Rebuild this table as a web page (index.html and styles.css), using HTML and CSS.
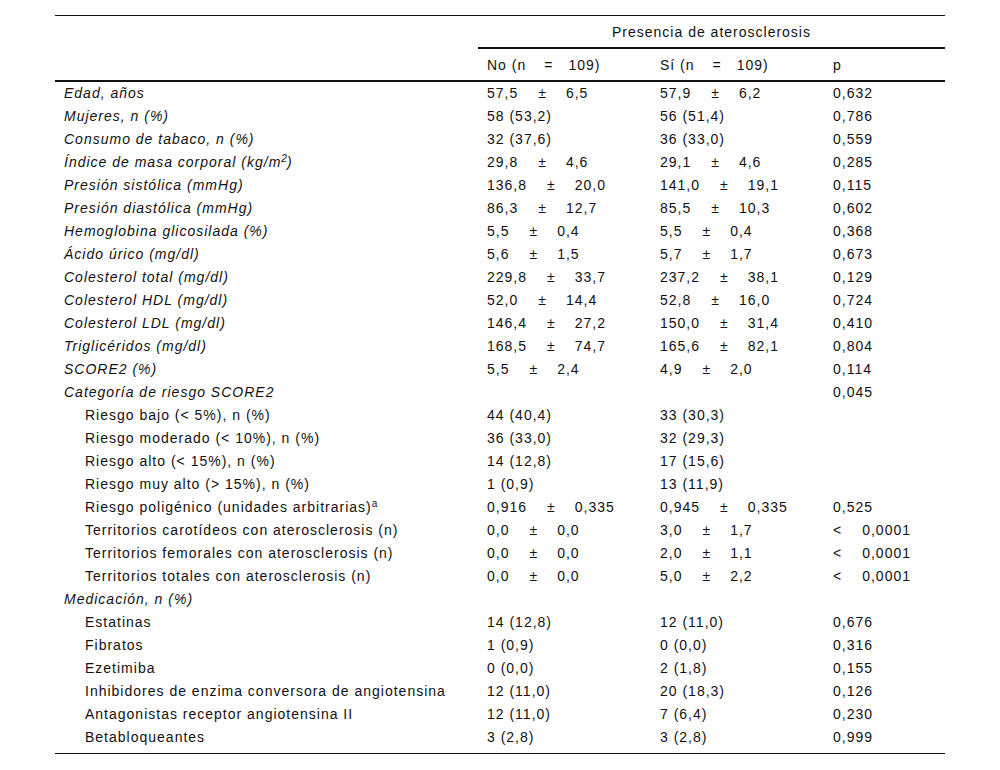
FILE: index.html
```html
<!DOCTYPE html>
<html lang="es">
<head>
<meta charset="utf-8">
<title>Presencia de aterosclerosis</title>
<link rel="stylesheet" href="styles.css">
</head>
<body>
<table class="tbl">
  <colgroup>
    <col class="c1"><col class="c2"><col class="c3"><col class="c4">
  </colgroup>
  <thead>
    <tr class="h1">
      <th class="blank"></th>
      <th class="group" colspan="3">Presencia de aterosclerosis</th>
    </tr>
    <tr class="h2">
      <th></th>
      <th>No (n<span class="eq">=</span>109)</th>
      <th>Sí (n<span class="eq">=</span>109)</th>
      <th>p</th>
    </tr>
  </thead>
  <tbody>
    <tr><td class="it">Edad, años</td><td>57,5<span class="pm">±</span>6,5</td><td>57,9<span class="pm">±</span>6,2</td><td>0,632</td></tr>
    <tr><td class="it">Mujeres, n (%)</td><td>58 (53,2)</td><td>56 (51,4)</td><td>0,786</td></tr>
    <tr><td class="it">Consumo de tabaco, n (%)</td><td>32 (37,6)</td><td>36 (33,0)</td><td>0,559</td></tr>
    <tr><td class="it">Índice de masa corporal (kg/m<sup>2</sup>)</td><td>29,8<span class="pm">±</span>4,6</td><td>29,1<span class="pm">±</span>4,6</td><td>0,285</td></tr>
    <tr><td class="it">Presión sistólica (mmHg)</td><td>136,8<span class="pm">±</span>20,0</td><td>141,0<span class="pm">±</span>19,1</td><td>0,115</td></tr>
    <tr><td class="it">Presión diastólica (mmHg)</td><td>86,3<span class="pm">±</span>12,7</td><td>85,5<span class="pm">±</span>10,3</td><td>0,602</td></tr>
    <tr><td class="it">Hemoglobina glicosilada (%)</td><td>5,5<span class="pm">±</span>0,4</td><td>5,5<span class="pm">±</span>0,4</td><td>0,368</td></tr>
    <tr><td class="it">Ácido úrico (mg/dl)</td><td>5,6<span class="pm">±</span>1,5</td><td>5,7<span class="pm">±</span>1,7</td><td>0,673</td></tr>
    <tr><td class="it">Colesterol total (mg/dl)</td><td>229,8<span class="pm">±</span>33,7</td><td>237,2<span class="pm">±</span>38,1</td><td>0,129</td></tr>
    <tr><td class="it">Colesterol HDL (mg/dl)</td><td>52,0<span class="pm">±</span>14,4</td><td>52,8<span class="pm">±</span>16,0</td><td>0,724</td></tr>
    <tr><td class="it">Colesterol LDL (mg/dl)</td><td>146,4<span class="pm">±</span>27,2</td><td>150,0<span class="pm">±</span>31,4</td><td>0,410</td></tr>
    <tr><td class="it">Triglicéridos (mg/dl)</td><td>168,5<span class="pm">±</span>74,7</td><td>165,6<span class="pm">±</span>82,1</td><td>0,804</td></tr>
    <tr><td class="it">SCORE2 (%)</td><td>5,5<span class="pm">±</span>2,4</td><td>4,9<span class="pm">±</span>2,0</td><td>0,114</td></tr>
    <tr><td class="it">Categoría de riesgo SCORE2</td><td></td><td></td><td>0,045</td></tr>
    <tr><td class="sub">Riesgo bajo (&lt; 5%), n (%)</td><td>44 (40,4)</td><td>33 (30,3)</td><td></td></tr>
    <tr><td class="sub">Riesgo moderado (&lt; 10%), n (%)</td><td>36 (33,0)</td><td>32 (29,3)</td><td></td></tr>
    <tr><td class="sub">Riesgo alto (&lt; 15%), n (%)</td><td>14 (12,8)</td><td>17 (15,6)</td><td></td></tr>
    <tr><td class="sub">Riesgo muy alto (&gt; 15%), n (%)</td><td>1 (0,9)</td><td>13 (11,9)</td><td></td></tr>
    <tr><td class="sub">Riesgo poligénico (unidades arbitrarias)<sup>a</sup></td><td>0,916<span class="pm">±</span>0,335</td><td>0,945<span class="pm">±</span>0,335</td><td>0,525</td></tr>
    <tr><td class="sub">Territorios carotídeos con aterosclerosis (n)</td><td>0,0<span class="pm">±</span>0,0</td><td>3,0<span class="pm">±</span>1,7</td><td><span class="lt">&lt;</span>0,0001</td></tr>
    <tr><td class="sub">Territorios femorales con aterosclerosis (n)</td><td>0,0<span class="pm">±</span>0,0</td><td>2,0<span class="pm">±</span>1,1</td><td><span class="lt">&lt;</span>0,0001</td></tr>
    <tr><td class="sub">Territorios totales con aterosclerosis (n)</td><td>0,0<span class="pm">±</span>0,0</td><td>5,0<span class="pm">±</span>2,2</td><td><span class="lt">&lt;</span>0,0001</td></tr>
    <tr><td class="it">Medicación, n (%)</td><td></td><td></td><td></td></tr>
    <tr><td class="sub">Estatinas</td><td>14 (12,8)</td><td>12 (11,0)</td><td>0,676</td></tr>
    <tr><td class="sub">Fibratos</td><td>1 (0,9)</td><td>0 (0,0)</td><td>0,316</td></tr>
    <tr><td class="sub">Ezetimiba</td><td>0 (0,0)</td><td>2 (1,8)</td><td>0,155</td></tr>
    <tr><td class="sub">Inhibidores de enzima conversora de angiotensina</td><td>12 (11,0)</td><td>20 (18,3)</td><td>0,126</td></tr>
    <tr><td class="sub">Antagonistas receptor angiotensina II</td><td>12 (11,0)</td><td>7 (6,4)</td><td>0,230</td></tr>
    <tr class="last"><td class="sub">Betabloqueantes</td><td>3 (2,8)</td><td>3 (2,8)</td><td>0,999</td></tr>
  </tbody>
</table>
</body>
</html>
```
FILE: styles.css
```css
html, body {
  margin: 0;
  padding: 0;
  background: #fff;
}
body {
  font-family: "Liberation Sans", Arial, sans-serif;
  font-size: 14px;
  letter-spacing: 1px;
  color: #111;
}
.tbl {
  margin: 15px 0 0 55px;
  width: 890px;
  table-layout: fixed;
  border-collapse: separate;
  border-spacing: 0;
  border-top: 1px solid #111;
  border-bottom: 1px solid #111;
}
.c1 { width: 423px; }
.c2 { width: 173px; }
.c3 { width: 173px; }
.c4 { width: 121px; }

th {
  font-weight: normal;
  text-align: left;
  padding: 0 9px;
  vertical-align: middle;
  white-space: nowrap;
}
.h1 th {
  height: 31px;
}
.h1 th.group {
  text-align: center;
  border-bottom: 2px solid #111;
}
.h1 th.blank {
  border-bottom: 2px solid transparent;
}
.h2 th {
  height: 31px;
  border-bottom: 2px solid #111;
}
td {
  padding: 0 9px;
  height: 23px;
  line-height: 23px;
  vertical-align: top;
  white-space: nowrap;
}
.it {
  font-style: italic;
}
.sub {
  padding-left: 30px;
}
.last td {
  padding-bottom: 4px;
}
.pm {
  margin: 0 19px 0 20px;
}
.eq {
  margin: 0 15px 0 18px;
}
.lt {
  margin-right: 20px;
}
sup {
  font-size: 10px;
  line-height: 0;
  vertical-align: 5px;
  letter-spacing: 0;
}
```
